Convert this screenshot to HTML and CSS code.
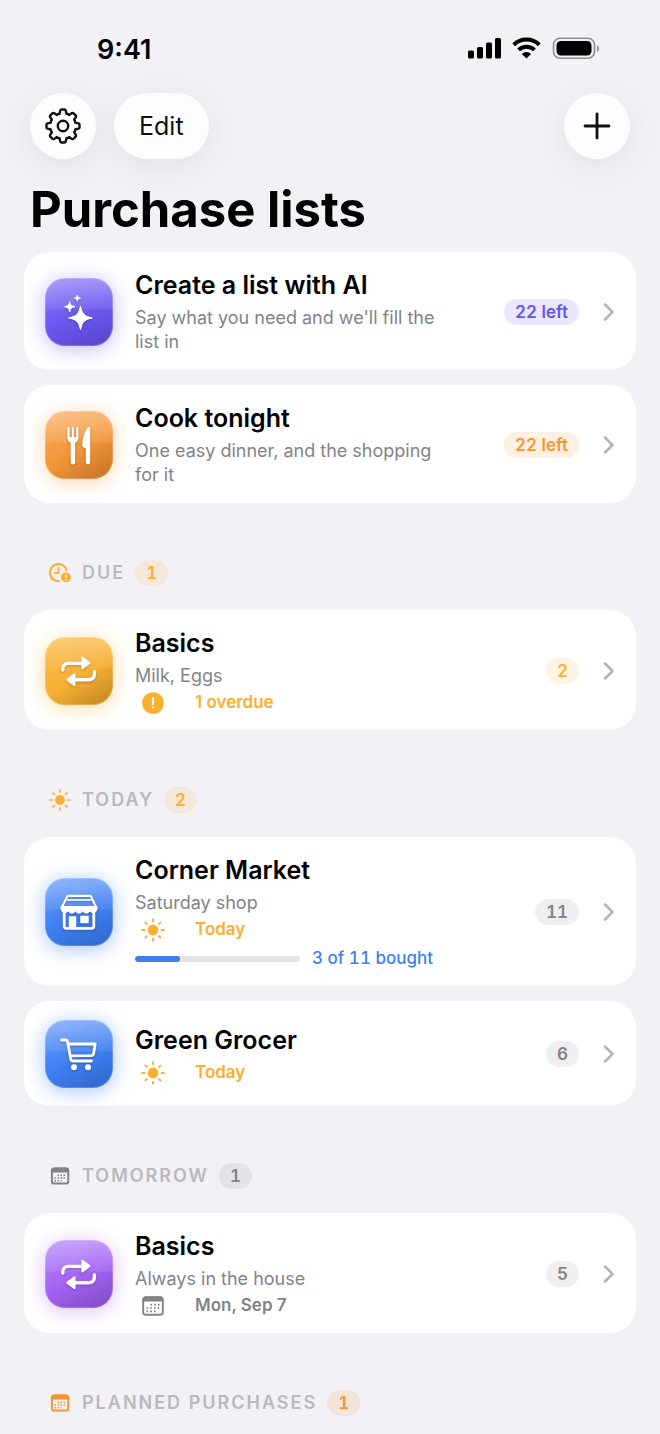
FILE: index.html
```
<!DOCTYPE html>
<html lang="en">
<head>
    <meta charset="UTF-8">
    <meta name="viewport" content="width=device-width, initial-scale=1.0">
    <title>Purchase lists</title>
    <link rel="stylesheet" href="styles.css">
</head>
<body>
    <!-- Shared icons -->
    <svg class="sprite" aria-hidden="true">
        <symbol id="chevron" viewBox="0 0 12 20">
            <path d="M2 2.5 9.5 10 2 17.5" fill="none" stroke="currentColor" stroke-width="2.5" stroke-linecap="round" stroke-linejoin="round"/>
        </symbol>
        <symbol id="sun" viewBox="0 0 24 24">
            <circle cx="12" cy="12" r="5.4" fill="currentColor"/>
            <path d="M12 1.200v2.200M12 20.600v2.200M1.200 12h2.200M20.600 12h2.200M4.400 4.400 5.900 5.900M18.100 18.100l1.500 1.500M4.400 19.600l1.500-1.500M18.100 5.900l1.500-1.500" stroke="currentColor" stroke-width="1.9" stroke-linecap="round"/>
        </symbol>
        <symbol id="repeat" viewBox="0 0 68 68">
            <path d="M17.800 33v-1c0-3.600 2-5.600 5.600-5.600H38M49.400 34.800v2c0 3.800-2 5.900-5.800 5.900H29" fill="none" stroke="currentColor" stroke-width="3.400" stroke-linecap="round"/>
            <path d="M37.300 20.500v11L44.500 26ZM29.500 37.200v11L22.200 42.700Z" fill="currentColor" stroke="currentColor" stroke-width="2" stroke-linejoin="round"/>
        </symbol>
        <symbol id="calendar" viewBox="0 0 24 22">
            <rect x="2.200" y="2.200" width="19.600" height="17.600" rx="2.600" fill="none" stroke="currentColor" stroke-width="1.900"/>
            <path d="M2 6V4.500A2.500 2.500 0 0 1 4.500 2h15A2.500 2.500 0 0 1 22 4.500V6Z" fill="currentColor" stroke="currentColor"/>
            <path d="M9.500 9.700h9.500M5.500 13h13.500M5.500 16.300h9" stroke="currentColor" stroke-width="1.700" stroke-dasharray="1.700 2"/>
        </symbol>
        <symbol id="calendar-small" viewBox="0 0 24 22">
            <rect x="3.900" y="3.400" width="16.400" height="15.200" rx="2.400" fill="none" stroke="currentColor" stroke-width="2"/>
            <path d="M3.500 7V5.500A2.500 2.500 0 0 1 6 3h12.200a2.500 2.500 0 0 1 2.500 2.500V7Z" fill="currentColor" stroke="currentColor"/>
            <path d="M9.500 10.300h8M6.500 13h11M6.500 15.700h7" stroke="currentColor" stroke-width="1.500" stroke-dasharray="1.500 1.500"/>
        </symbol>
    </svg>

    <header class="status-bar">
        <span class="time">9:41</span>
        <svg class="status-icons" viewBox="0 0 132 24" aria-hidden="true">
            <rect x="0" y="13.500" width="6" height="8" rx="1.600"/>
            <rect x="9" y="10" width="6" height="11.500" rx="1.600"/>
            <rect x="18" y="5.500" width="6" height="16" rx="1.600"/>
            <rect x="27" y="1" width="6" height="20.500" rx="1.600"/>
            <g fill="none" stroke="#000" stroke-width="4">
                <path d="M45.700 7.700a18.500 18.500 0 0 1 25.600 0"/>
                <path d="M50.600 12.900a11.500 11.500 0 0 1 15.800 0"/>
            </g>
            <path d="M58.500 21.500 53.900 16.900a6.500 6.500 0 0 1 9.200 0Z"/>
            <rect x="85.500" y="1.300" width="41" height="20" rx="6.500" fill="none" stroke="#8e8e93" stroke-width="1.600"/>
            <rect x="88.500" y="4" width="35" height="14.600" rx="4.500"/>
            <path d="M129 8v7q2-1 2-3.500T129 8Z" fill="#8e8e93"/>
        </svg>
    </header>

    <nav class="toolbar">
        <button class="tool round" type="button" aria-label="Settings">
            <svg width="36" height="36" viewBox="-18 -18 36 36" fill="none" stroke="currentColor" stroke-width="2.400" stroke-linejoin="round">
                <path d="M-3.500-12.200-2.700-15.500Q-2.400-16.500-1.500-16.500h3Q2.400-16.500 2.700-15.500L3.500-12.200Q4.900-12.600 6.100-11.100L9-12.900Q9.900-13.400 10.600-12.700L12.700-10.600Q13.400-9.900 12.900-9L11.100-6.100Q12.600-4.900 12.200-3.500L15.500-2.700Q16.500-2.400 16.500-1.500v3Q16.500 2.400 15.500 2.700L12.200 3.500Q12.600 4.900 11.100 6.100L12.900 9Q13.400 9.900 12.700 10.600L10.600 12.700Q9.900 13.400 9 12.900L6.100 11.100Q4.900 12.600 3.500 12.200L2.700 15.500Q2.400 16.500 1.500 16.500h-3Q-2.400 16.500-2.700 15.500L-3.500 12.200Q-4.900 12.600-6.100 11.100L-9 12.900Q-9.900 13.400-10.600 12.700L-12.700 10.600Q-13.400 9.900-12.900 9L-11.100 6.100Q-12.600 4.900-12.200 3.500L-15.500 2.700Q-16.500 2.400-16.500 1.500v-3Q-16.500-2.400-15.500-2.700L-12.200-3.500Q-12.600-4.900-11.100-6.100L-12.900-9Q-13.400-9.900-12.700-10.600L-10.600-12.700Q-9.900-13.400-9-12.900L-6.100-11.100Q-4.900-12.600-3.500-12.200Z"/>
                <circle r="5.200"/>
            </svg>
        </button>
        <button class="tool" type="button">Edit</button>
        <button class="tool round add" type="button" aria-label="Add list">
            <svg width="28" height="28" viewBox="0 0 28 28" fill="none" stroke="currentColor" stroke-width="2.800" stroke-linecap="round">
                <path d="M14 2v24M2 14h24"/>
            </svg>
        </button>
    </nav>

    <main>
        <h1>Purchase lists</h1>

        <div class="cards">
            <a class="card" href="#ai">
                <span class="tile indigo">
                    <svg viewBox="0 0 68 68" fill="currentColor" stroke="currentColor" stroke-linejoin="round">
                        <path d="M35.500 28c1.800 8.200 3.700 10.100 11.900 11.900-8.200 1.800-10.100 3.700-11.900 11.900-1.800-8.200-3.700-10.100-11.900-11.900 8.200-1.800 10.100-3.700 11.900-11.900Z"/>
                        <path d="M24.700 23.500c.8 3.700 1.500 4.400 5.200 5.200-3.700.8-4.400 1.500-5.200 5.200-.8-3.700-1.500-4.400-5.200-5.200 3.700-.8 4.400-1.500 5.200-5.200Z"/>
                        <path d="M32.300 17c.5 2.200.9 2.600 3.100 3.100-2.200.5-2.600.9-3.100 3.100-.5-2.200-.9-2.600-3.100-3.100 2.200-.5 2.600-.9 3.100-3.100Z"/>
                    </svg>
                </span>
                <span class="info">
                    <strong class="title">Create a list with AI</strong>
                    <span class="note">Say what you need and we'll fill the list in</span>
                </span>
                <span class="pill indigo-text">22 left</span>
                <svg class="chevron"><use href="#chevron"/></svg>
            </a>

            <a class="card" href="#cook">
                <span class="tile orange">
                    <svg viewBox="0 0 68 68" fill="currentColor">
                        <path d="M23.500 17v10M27.900 17v10M32.300 17v10" stroke="currentColor" stroke-width="2.200" stroke-linecap="round"/>
                        <path d="M22.400 26h11c0 3.200-1.200 4.700-3.300 5.800v19.400a2.200 2.200 0 0 1-4.400 0V31.800c-2.100-1.100-3.300-2.600-3.300-5.800Z"/>
                        <path d="M45.200 17.200v34a2.200 2.200 0 0 1-4.400 0V37.500l-2.500-1.200a1.700 1.700 0 0 1-1-1.900c.2-7 2-14 5.600-18.200q2.300-1.500 2.300 1Z"/>
                    </svg>
                </span>
                <span class="info">
                    <strong class="title">Cook tonight</strong>
                    <span class="note">One easy dinner, and the shopping for it</span>
                </span>
                <span class="pill orange-text">22 left</span>
                <svg class="chevron"><use href="#chevron"/></svg>
            </a>
        </div>

        <section>
            <h2 class="section-title">
                <svg class="section-icon amber-icon" viewBox="0 0 24 22" fill="none" stroke="currentColor" stroke-width="2.200">
                    <path d="M18.800 9A8.500 8.500 0 1 0 11.500 19"/>
                    <path d="M10.500 5V11H6" stroke-width="1.900"/>
                    <circle cx="18" cy="15.300" r="4.900" fill="currentColor" stroke="none"/>
                    <path d="M18 12.400v3.400M18 17v1.400" stroke="#f1f1f6" stroke-width="1.600"/>
                </svg>
                Due <span class="pill amber-text">1</span>
            </h2>
            <div class="cards">
                <a class="card" href="#basics-due">
                    <span class="tile amber"><svg><use href="#repeat"/></svg></span>
                    <span class="info">
                        <strong class="title">Basics</strong>
                        <span class="note">Milk, Eggs</span>
                        <span class="meta amber-icon">
                            <svg viewBox="0 0 24 24">
                                <circle cx="12" cy="12" r="10.800" fill="currentColor"/>
                                <path d="M12 7v6M12 16.300v.2" stroke="#fff" stroke-width="2.200" stroke-linecap="round"/>
                            </svg>
                            1 overdue
                        </span>
                    </span>
                    <span class="pill amber-text">2</span>
                    <svg class="chevron"><use href="#chevron"/></svg>
                </a>
            </div>
        </section>

        <section>
            <h2 class="section-title">
                <svg class="section-icon amber-icon"><use href="#sun"/></svg>
                Today <span class="pill amber-text">2</span>
            </h2>
            <div class="cards">
                <a class="card" href="#corner-market">
                    <span class="tile blue">
                        <svg viewBox="0 0 68 68" fill="none" stroke="currentColor" stroke-width="2.200" stroke-linejoin="round">
                            <path d="M23.500 17.800h21.200q1.200 0 1.600 1.200L51 29H17l4.900-10q.4-1.200 1.600-1.200Z"/>
                            <path d="M21.500 22h25" stroke-width="1.600"/>
                            <path d="M16 28.500h36v2.500a3.900 3.900 0 0 1-7.200 1.800 3.900 3.900 0 0 1-7.200 0 3.900 3.900 0 0 1-7.200 0 3.900 3.900 0 0 1-7.200 0A3.900 3.900 0 0 1 16 31Z" fill="currentColor" stroke-width="1"/>
                            <path d="M19.200 34v14q0 2.300 2.300 2.300h25q2.300 0 2.300-2.300V34" stroke-width="2.800"/>
                            <path d="M24.500 39h6v10.500h-6ZM36 38.500h7v6h-7Z" fill="currentColor" stroke-width="1.500"/>
                        </svg>
                    </span>
                    <span class="info">
                        <strong class="title">Corner Market</strong>
                        <span class="note">Saturday shop</span>
                        <span class="meta amber-icon">
                            <svg><use href="#sun"/></svg>
                            Today
                        </span>
                        <span class="progress">
                            <span class="track"><span class="fill" style="width: 27%"></span></span>
                            3 of 11 bought
                        </span>
                    </span>
                    <span class="pill">11</span>
                    <svg class="chevron"><use href="#chevron"/></svg>
                </a>

                <a class="card" href="#green-grocer">
                    <span class="tile blue">
                        <svg viewBox="0 0 68 68" fill="none" stroke="currentColor" stroke-width="2.800" stroke-linecap="round" stroke-linejoin="round">
                            <path d="M16.500 20h4.200q1.500 0 1.800 1.500l3.200 17.300q.4 2.200 2.400 2.200H46.500"/>
                            <path d="M23.300 24h26.900l-1.500 9.300q-.4 2.200-2.600 2.300L25.500 35.800"/>
                            <circle cx="29" cy="47.300" r="3" fill="currentColor" stroke="none"/>
                            <circle cx="43" cy="47.300" r="3" fill="currentColor" stroke="none"/>
                        </svg>
                    </span>
                    <span class="info">
                        <strong class="title">Green Grocer</strong>
                        <span class="meta amber-icon">
                            <svg><use href="#sun"/></svg>
                            Today
                        </span>
                    </span>
                    <span class="pill">6</span>
                    <svg class="chevron"><use href="#chevron"/></svg>
                </a>
            </div>
        </section>

        <section>
            <h2 class="section-title">
                <svg class="section-icon gray-icon"><use href="#calendar-small"/></svg>
                Tomorrow <span class="pill">1</span>
            </h2>
            <div class="cards">
                <a class="card" href="#basics">
                    <span class="tile purple"><svg><use href="#repeat"/></svg></span>
                    <span class="info">
                        <strong class="title">Basics</strong>
                        <span class="note">Always in the house</span>
                        <span class="meta gray-icon">
                            <svg><use href="#calendar"/></svg>
                            Mon, Sep 7
                        </span>
                    </span>
                    <span class="pill">5</span>
                    <svg class="chevron"><use href="#chevron"/></svg>
                </a>
            </div>
        </section>

        <section>
            <h2 class="section-title">
                <svg class="section-icon orange-icon"><use href="#calendar-small"/></svg>
                Planned purchases <span class="pill orange-text">1</span>
            </h2>
        </section>
    </main>
</body>
</html>
```

FILE: styles.css
```
* {
    box-sizing: border-box;
}
body {
    margin: 0;
    background: #f1f1f6;
    color: #000;
    font-family: Inter, "Liberation Sans", sans-serif;
}
.sprite {
    display: none;
}

/* Status bar and toolbar */
.status-bar {
    display: flex;
    justify-content: space-between;
    align-items: center;
    height: 93px;
    padding: 5px 60px 0 97px;
}
.time {
    font-size: 27px;
    font-weight: 600;
}
.status-icons {
    width: 132px;
    height: 24px;
}
.toolbar {
    display: flex;
    gap: 18px;
    padding: 0 30px;
}
.tool {
    display: flex;
    align-items: center;
    justify-content: center;
    height: 66px;
    padding: 0 25px;
    border: none;
    border-radius: 33px;
    background: #fdfdff;
    box-shadow: 0 8px 36px rgba(0, 0, 0, 0.07);
    color: #111;
    font: 400 25px Inter, "Liberation Sans", sans-serif;
    cursor: pointer;
}
.round {
    width: 66px;
    padding: 0;
}
.add {
    margin-left: auto;
}

/* Lists */
main {
    padding: 0 24px 17px;
}
h1 {
    margin: 20px 6px 11px;
    font-size: 49px;
    font-weight: 700;
    line-height: 62px;
}
.cards {
    display: flex;
    flex-direction: column;
    gap: 15px;
}
.card {
    display: flex;
    align-items: center;
    padding: 17px 21px 16px;
    border-radius: 26px;
    background: #fff;
    color: inherit;
    text-decoration: none;
}
.tile {
    flex: none;
    width: 68px;
    height: 68px;
    margin-right: 22px;
    border-radius: 20px;
    color: #fff;
}
.tile svg {
    display: block;
    width: 68px;
    height: 68px;
    filter: drop-shadow(0 1px 1px rgba(0, 0, 0, 0.25));
}
/* The first layer is the gloss on the upper half */
.indigo {
    background:
        linear-gradient(rgba(255, 255, 255, 0.28), rgba(255, 255, 255, 0.08) 45%, transparent 48%),
        linear-gradient(160deg, #8a79f8, #6a57f0 55%, #5545ca);
    box-shadow: 0 3px 20px rgba(104, 84, 240, 0.4), inset 0 0 0 1px rgba(255, 255, 255, 0.2);
}
.orange {
    background:
        linear-gradient(rgba(255, 255, 255, 0.28), rgba(255, 255, 255, 0.08) 45%, transparent 48%),
        linear-gradient(150deg, #faae65, #f29536 55%, #c17028);
    box-shadow: 0 3px 20px rgba(245, 150, 50, 0.4), inset 0 0 0 1px rgba(255, 255, 255, 0.2);
}
.amber {
    background:
        linear-gradient(rgba(255, 255, 255, 0.25), rgba(255, 255, 255, 0.05) 45%, transparent 48%),
        linear-gradient(150deg, #fabd50, #f7b035 55%, #bd8420);
    box-shadow: 0 3px 20px rgba(252, 176, 48, 0.45), inset 0 0 0 1px rgba(255, 255, 255, 0.2);
}
.blue {
    background:
        linear-gradient(rgba(255, 255, 255, 0.28), rgba(255, 255, 255, 0.08) 45%, transparent 48%),
        linear-gradient(155deg, #6a9df8, #3e7ff3 55%, #2f66c8);
    box-shadow: 0 3px 20px rgba(60, 127, 245, 0.45), inset 0 0 0 1px rgba(255, 255, 255, 0.2);
}
.purple {
    background:
        linear-gradient(rgba(255, 255, 255, 0.28), rgba(255, 255, 255, 0.08) 45%, transparent 48%),
        linear-gradient(155deg, #b787fb, #a362f3 55%, #7c49c0);
    box-shadow: 0 3px 20px rgba(165, 95, 250, 0.4), inset 0 0 0 1px rgba(255, 255, 255, 0.2);
}
.info {
    display: flex;
    flex: 1;
    flex-direction: column;
    justify-content: center;
    gap: 3px;
    min-width: 0;
    min-height: 72px;
}
.title {
    margin-bottom: 2px;
    font-size: 25px;
    font-weight: 600;
    line-height: 32px;
}
.note {
    color: #838387;
    font-size: 18px;
    line-height: 24px;
}
.meta {
    display: flex;
    align-items: center;
    gap: 30px;
    padding-left: 6px;
    font-size: 17px;
    font-weight: 600;
    line-height: 23px;
}
.meta svg {
    width: 24px;
    height: 24px;
    margin: -1px 0;
}
.progress {
    display: flex;
    align-items: center;
    gap: 12px;
    margin-top: 3px;
    color: #3c7ff5;
    font-size: 17px;
    font-weight: 500;
    font-variant-numeric: tabular-nums;
    line-height: 23px;
}
.track {
    width: 165px;
    height: 6px;
    border-radius: 3px;
    background: #e4e4e5;
    overflow: hidden;
}
.fill {
    display: block;
    height: 6px;
    border-radius: 3px;
    background: #3c7ff5;
}
.pill {
    flex: none;
    padding: 0 11px;
    border-radius: 13px;
    background: rgba(130, 130, 135, 0.13);
    color: #838387;
    font-size: 17px;
    font-weight: 600;
    font-variant-numeric: tabular-nums;
    line-height: 26px;
    letter-spacing: normal;
    text-align: center;
}
.card .pill {
    margin-left: 48px;
}
.chevron {
    flex: none;
    width: 12px;
    height: 20px;
    margin-left: 24px;
    color: #b4b4b8;
}
.section-title {
    display: flex;
    align-items: center;
    margin: 57px 24px 24px;
    color: #b9b9be;
    font-size: 18px;
    font-weight: 600;
    line-height: 26px;
    letter-spacing: 2px;
    text-transform: uppercase;
}
.section-icon {
    width: 24px;
    height: 22px;
    margin-right: 10px;
}
.section-title .pill {
    margin-left: 10px;
}

/* Accent colours */
.indigo-text {
    background: #eae7fd;
    color: #6754ee;
}
.orange-text {
    background: rgba(245, 150, 50, 0.14);
    color: #f5962f;
}
.amber-text {
    background: rgba(252, 176, 48, 0.14);
    color: #fcae2f;
}
.amber-icon {
    color: #fcae2f;
}
.orange-icon {
    color: #f5962f;
}
.gray-icon {
    color: #838387;
}
```
